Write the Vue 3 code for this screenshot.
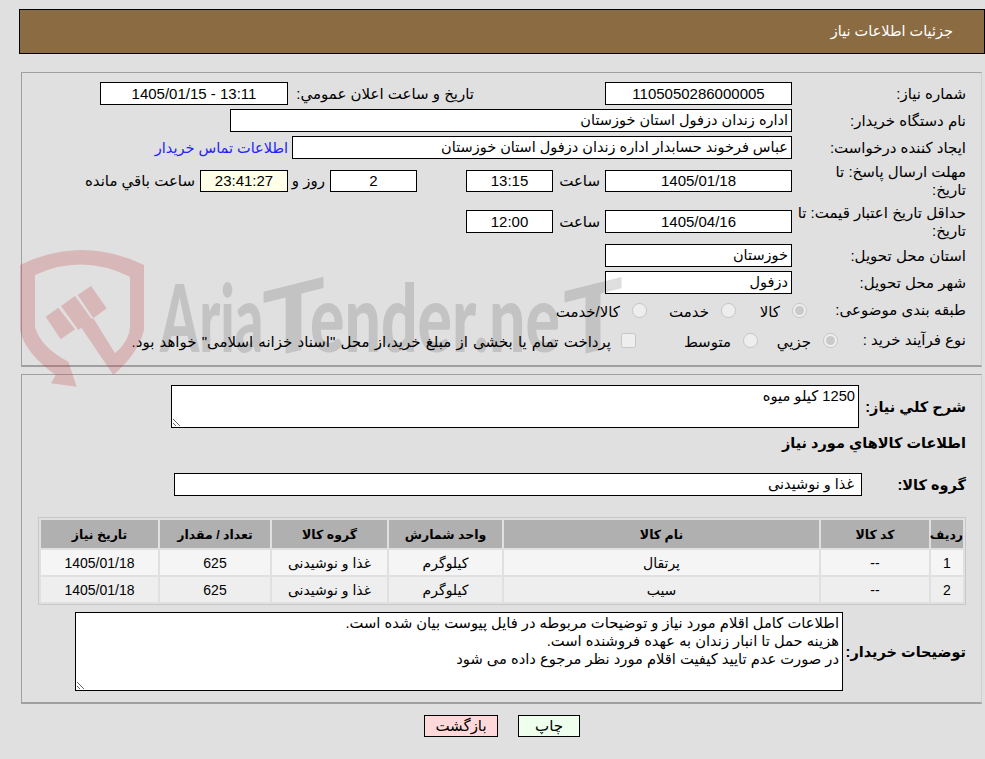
<template>
  <div class="page" dir="rtl">
    <div class="title-bar">جزئیات اطلاعات نیاز</div>

    <section class="panel panel-info">
      <div class="row">
        <label class="lbl">شماره نیاز:</label>
        <div class="box box-main">1105050286000005</div>
        <span class="announce-label">تاریخ و ساعت اعلان عمومي:</span>
        <div class="box box-announce" dir="ltr">1405/01/15 - 13:11</div>
      </div>
      <div class="row">
        <label class="lbl">نام دستگاه خریدار:</label>
        <div class="box box-buyer text-right">اداره زندان دزفول استان خوزستان</div>
      </div>
      <div class="row">
        <label class="lbl">ایجاد کننده درخواست:</label>
        <div class="box box-creator text-right">عباس فرخوند حسابدار اداره زندان دزفول استان خوزستان</div>
        <a class="contact" href="#">اطلاعات تماس خریدار</a>
      </div>
      <div class="row row-tall">
        <label class="lbl">مهلت ارسال پاسخ: تا تاریخ:</label>
        <div class="box box-main box-short">1405/01/18</div>
        <span class="unit unit-hour">ساعت</span>
        <div class="box box-time box-short">13:15</div>
        <div class="box box-days box-short">2</div>
        <span class="unit unit-day">روز و</span>
        <div class="box box-left box-short">23:41:27</div>
        <span class="unit">ساعت باقي مانده</span>
      </div>
      <div class="row row-tall row-validity">
        <label class="lbl lbl-wide">حداقل تاریخ اعتبار قیمت: تا تاریخ:</label>
        <div class="box box-main">1405/04/16</div>
        <span class="unit unit-hour">ساعت</span>
        <div class="box box-time">12:00</div>
      </div>
      <div class="row">
        <label class="lbl">استان محل تحویل:</label>
        <div class="box box-main box-fa text-right">خوزستان</div>
      </div>
      <div class="row">
        <label class="lbl">شهر محل تحویل:</label>
        <div class="box box-main box-fa text-right">دزفول</div>
      </div>
      <div class="row row-radio row-category">
        <label class="lbl lbl-category">طبقه بندی موضوعی:</label>
        <input type="radio" disabled checked />
        <span class="opt opt-goods">کالا</span>
        <input type="radio" disabled />
        <span class="opt opt-service">خدمت</span>
        <input type="radio" disabled />
        <span class="opt">کالا/خدمت</span>
      </div>
      <div class="row row-radio">
        <label class="lbl lbl-process">نوع فرآیند خرید :</label>
        <input type="radio" disabled checked />
        <span class="opt opt-minor">جزیي</span>
        <input type="radio" disabled />
        <span class="opt opt-medium">متوسط</span>
        <input type="checkbox" disabled />
        <span class="opt opt-long">پرداخت تمام یا بخشی از مبلغ خرید،از محل "اسناد خزانه اسلامی" خواهد بود.</span>
      </div>
    </section>

    <section class="panel panel-goods">
      <div class="summary-row">
        <label class="lbl-bold summary-label">شرح کلي نیاز:</label>
        <textarea class="area area-summary" readonly>1250 کیلو میوه</textarea>
      </div>
      <h3 class="goods-title">اطلاعات کالاهاي مورد نیاز</h3>
      <div class="group-row">
        <label class="lbl-bold group-label">گروه کالا:</label>
        <div class="box box-group box-fa text-right">غذا و نوشیدنی</div>
      </div>

      <table class="goods-table">
        <thead>
          <tr>
            <th v-for="col in columns" :key="col.title" :style="{ width: col.width + 'px' }">{{ col.title }}</th>
          </tr>
        </thead>
        <tbody>
          <tr v-for="item in items" :key="item.row">
            <td>{{ item.row }}</td>
            <td>--</td>
            <td>{{ item.name }}</td>
            <td>کیلوگرم</td>
            <td>غذا و نوشیدنی</td>
            <td>625</td>
            <td>1405/01/18</td>
          </tr>
        </tbody>
      </table>

      <div class="notes-row">
        <label class="lbl-bold notes-label">توضیحات خریدار:</label>
        <textarea class="area area-notes" readonly>{{ notes }}</textarea>
      </div>
    </section>

    <div class="actions">
      <button type="button" class="btn btn-print">چاپ</button>
      <button type="button" class="btn btn-back">بازگشت</button>
    </div>

    <!-- watermark lies over the form, see-through so the text stays readable -->
    <svg class="watermark" viewBox="0 0 1830 450" width="610" height="150" aria-hidden="true">
      <g fill="#c44048" opacity="0.25">
        <path fill-rule="evenodd" d="M15 75 Q200 -15 387 75 L387 270 Q370 340 295 405 L190 250 L235 235 L300 340 Q345 300 345 260 L345 110 Q200 40 60 105 L60 260 Q75 320 160 365 L185 440 L108 430 L122 405 Q30 340 15 270 Z" />
        <path d="M92 230 L130 203 L180 268 L137 298 Z" />
        <path d="M138 198 L180 168 L232 240 L190 270 Z" />
        <path d="M188 165 L228 138 L275 205 L235 235 Z" />
      </g>
      <g fill="#000" opacity="0.125" font-family="Lato, sans-serif" font-weight="900" font-size="280">
        <text x="435" y="336" textLength="310" lengthAdjust="spacingAndGlyphs">Aria</text>
        <text x="741" y="336" textLength="189" lengthAdjust="spacingAndGlyphs" transform="translate(0 208) skewY(-14)">T</text>
        <text x="885" y="336" textLength="750" lengthAdjust="spacingAndGlyphs">ender.ne</text>
        <text x="1644" y="336" textLength="180" lengthAdjust="spacingAndGlyphs" transform="translate(0 432) skewY(-14)">T</text>
      </g>
    </svg>
  </div>
</template>

<script setup>
const columns = [
  { title: 'ردیف', width: 32 },
  { title: 'کد کالا', width: 108 },
  { title: 'نام کالا', width: 315 },
  { title: 'واحد شمارش', width: 113 },
  { title: 'گروه کالا', width: 115 },
  { title: 'تعداد / مقدار', width: 110 },
  { title: 'تاریخ نیاز', width: 117 }
]

const items = [
  { row: 1, name: 'پرتقال' },
  { row: 2, name: 'سیب' }
]

const notes = `اطلاعات کامل اقلام مورد نیاز و توضیحات مربوطه در فایل پیوست بیان شده است.
هزینه حمل تا انبار زندان به عهده فروشنده است.
در صورت عدم تایید کیفیت اقلام مورد نظر مرجوع داده می شود`
</script>

<style scoped>
.page {
  position: relative;
  width: 985px;
  height: 759px;
  padding-top: 9px;
  box-sizing: border-box;
  background: #e0e0e0;
  color: #000;
  font-family: "Liberation Sans", "DejaVu Sans", sans-serif;
  font-size: 15px;
  overflow: hidden;
}

.watermark {
  position: absolute;
  left: 15px;
  top: 240px;
  z-index: 5;
  direction: ltr;
  pointer-events: none;
}

.title-bar {
  position: relative;
  box-sizing: border-box;
  width: 966px;
  height: 45px;
  margin-left: 19px;
  padding-right: 31px;
  line-height: 43px;
  border: 1px solid #000;
  background: #8b6b41;
  color: #fff;
  font-size: 14.5px;
}

.panel {
  position: relative;
  box-sizing: border-box;
  width: 961px;
  margin-right: 3px;
  margin-left: 21px;
  border: 1px solid #a0a0a0;
  border-right-color: #d0d0d0;
  border-bottom-width: 2px;
}

.panel-info {
  height: 295px;
  margin-top: 18px;
  padding: 9px 15px 0 0;
}

.panel-goods {
  height: 330px;
  margin-top: 7px;
  padding: 10px 15px 0 0;
}

.row {
  display: flex;
  align-items: center;
  height: 23px;
  margin-bottom: 4px;
}

.lbl {
  width: 166px;
  margin-left: 8px;
  flex: none;
  line-height: 18px;
}

.lbl-wide {
  width: 170px;
  margin-left: 4px;
}

.box {
  box-sizing: border-box;
  height: 23px;
  flex: none;
  border: 1px solid #000;
  background: #fff;
  line-height: 21px;
  text-align: center;
  padding: 0 3px;
}

.box-short {
  height: 22px;
  line-height: 20px;
}

.text-right,
.box-fa {
  text-align: right;
  font-size: 14.5px;
}

.box-main {
  width: 187px;
}

.announce-label {
  margin-right: 131px;
  width: 181px;
  flex: none;
}

.box-announce {
  margin-right: 5px;
  width: 188px;
}

.box-buyer {
  width: 562px;
}

.box-creator {
  width: 500px;
}

.contact {
  margin-right: 4px;
  color: #2222ff;
  text-decoration: none;
  font-size: 14.5px;
}

.row-tall {
  height: 36px;
}

.row-validity {
  height: 37px;
}

.unit {
  flex: none;
  margin-right: 5px;
}

.unit-hour {
  width: 47px;
}

.unit-day {
  width: 37px;
}

.box-time {
  width: 87px;
}

.box-days {
  width: 87px;
  margin-right: 49px;
}

.box-left {
  width: 88px;
}

.box-left.box-short {
  background: #ffffe8;
}

.row-radio {
  height: 24px;
  margin-bottom: 6px;
}

.row-category {
  margin-top: 2px;
}

.row-radio input {
  flex: none;
  width: 15px;
  height: 15px;
  margin: 0;
}

.opt {
  flex: none;
  box-sizing: border-box;
  padding-right: 12px;
  margin-top: 4px;
}

.lbl-category {
  width: 159px;
  margin-left: 0;
}

.lbl-process {
  width: 128px;
  margin-left: 0;
}

.opt-goods {
  width: 56px;
}

.opt-service {
  width: 74px;
}

.opt-minor {
  width: 65px;
}

.opt-medium {
  width: 107px;
}

.opt-long {
  padding-right: 10px;
  word-spacing: 1px;
}

.lbl-bold {
  flex: none;
  font-weight: 700;
  font-size: 14.5px;
  white-space: nowrap;
}

.summary-row {
  display: flex;
  align-items: center;
  height: 43px;
}

.summary-label {
  width: 107px;
}

.area {
  display: block;
  box-sizing: border-box;
  border: 1px solid #000;
  background: #fff;
  font: inherit;
  font-size: 14.7px;
  padding: 1px 3px;
  outline: none;
  border-radius: 0;
  color: #000;
}

.area-summary {
  width: 688px;
  height: 43px;
}

.goods-title {
  margin: 0;
  height: 30px;
  line-height: 30px;
  font-size: 14.5px;
  font-weight: 700;
}

.group-row {
  display: flex;
  align-items: center;
  height: 23px;
  margin-top: 15px;
}

.group-label {
  width: 104px;
}

.box-group {
  width: 688px;
  padding-right: 7px;
}

.goods-table {
  width: 928px;
  margin-top: 21px;
  border: 1px solid #c8c8c8;
  border-spacing: 2px;
  table-layout: fixed;
  font-size: 14px;
  box-sizing: border-box;
}

.goods-table th {
  height: 28px;
  padding: 0;
  background: #b0b0b0;
  font-size: 12.5px;
}

.goods-table td {
  height: 25px;
  padding: 0;
  text-align: center;
}

.goods-table tbody tr:nth-child(odd) td {
  background: #f5f5f5;
}

.goods-table tbody tr:nth-child(even) td {
  background: #eeeeee;
}

.notes-row {
  display: flex;
  align-items: center;
  margin-top: 7px;
}

.notes-label {
  width: 123px;
}

.area-notes {
  width: 768px;
  height: 79px;
  line-height: 18px;
}

.actions {
  position: relative;
  display: flex;
  margin-top: 11px;
  margin-right: 405px;
  gap: 20px;
}

.btn {
  box-sizing: border-box;
  height: 22px;
  border: 1px solid #000;
  font: inherit;
  padding: 0;
  color: #000;
}

.btn-print {
  width: 62px;
  background: #eeffee;
}

.btn-back {
  width: 74px;
  background: #ffd9d9;
}
</style>
